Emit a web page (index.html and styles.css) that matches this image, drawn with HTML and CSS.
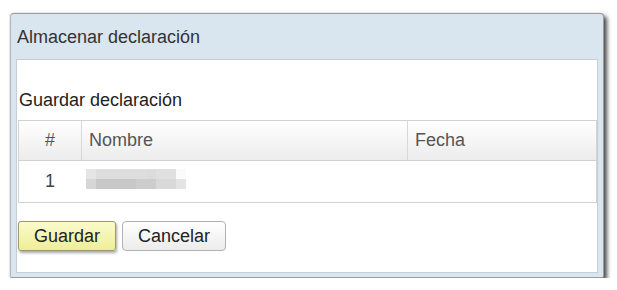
FILE: index.html
```html
<!DOCTYPE html>
<html lang="es">
<head>
<meta charset="utf-8">
<title>Almacenar declaración</title>
<link rel="stylesheet" href="styles.css">
</head>
<body>
<div class="dialog">
  <div class="dialog-title">Almacenar declaración</div>
  <div class="dialog-content">
    <div class="section-title">Guardar declaración</div>
    <div class="tbl">
      <div class="row head">
        <div class="cell c1">#</div>
        <div class="cell c2">Nombre</div>
        <div class="cell c3">Fecha</div>
      </div>
      <div class="row body">
        <div class="cell c1">1</div>
        <div class="cell c2"><span class="blur"></span></div>
        <div class="cell c3"></div>
      </div>
    </div>
    <div class="actions">
      <button class="btn btn-primary">Guardar</button>
      <button class="btn">Cancelar</button>
    </div>
  </div>
</div>
</body>
</html>
```

FILE: styles.css
```css
html, body {
  margin: 0;
  padding: 0;
  background: #ffffff;
}

body {
  font-family: "Liberation Sans", Arial, sans-serif;
  font-size: 18px;
  color: #333;
}

.dialog {
  box-sizing: border-box;
  width: 594px;
  height: 265px;
  margin: 13px 0 0 10px;
  padding: 0 5px 4px 5px;
  background: #d9e5ef;
  border: 1px solid #9c9c9c;
  border-left-color: #b4b4b4;
  border-radius: 4px 4px 2px 2px;
  box-shadow: 3px 3px 4px rgba(0, 0, 0, 0.7), 0 0 2px rgba(0, 0, 0, 0.2);
}

.dialog-title {
  box-sizing: border-box;
  height: 45px;
  padding: 2px 0 0 1px;
  line-height: 43px;
  color: #333;
}

.dialog-content {
  box-sizing: border-box;
  height: 214px;
  background: #ffffff;
  border: 1px solid #c6cfd8;
  padding: 30px 0 0 1px;
}

.section-title {
  height: 20px;
  line-height: 20px;
  margin: 0 0 10px 0;
  padding-left: 1px;
  color: #222;
}

.tbl {
  box-sizing: border-box;
  width: 579px;
  border: 1px solid #d2d2d2;
  border-bottom: none;
}

.row {
  display: grid;
  grid-template-columns: 62px 326px 189px;
  box-sizing: border-box;
  border-bottom: 1px solid #d2d2d2;
}

.head {
  height: 40px;
  background: linear-gradient(#ffffff, #ececec);
  color: #555;
}

.body {
  height: 42px;
  color: #444;
}

.cell {
  box-sizing: border-box;
  line-height: 39px;
  white-space: nowrap;
}

.body .cell {
  line-height: 40px;
}

.c1 {
  text-align: center;
}

.head .c2,
.head .c3 {
  border-left: 1px solid #d8d8d8;
  padding-left: 7px;
}

.body .c2 {
  padding-left: 5px;
  display: flex;
  align-items: flex-start;
}

.blur {
  display: block;
  width: 100px;
  height: 20px;
  margin-top: 8px;
  background:
    linear-gradient(to right,
      #e5e5e5 0, #e5e5e5 10px,
      #dedede 10px, #dedede 60px,
      #dcdcdc 60px, #dcdcdc 70px,
      #e0e0e0 70px, #e0e0e0 90px,
      #fbfbfb 90px, #fbfbfb 100px) top / 100px 10px no-repeat,
    linear-gradient(to right,
      #d6d6d6 0, #d6d6d6 10px,
      #c8c8c8 10px, #c8c8c8 50px,
      #cdcdcd 50px, #cdcdcd 70px,
      #d9d9d9 70px, #d9d9d9 90px,
      #e4e4e4 90px, #e4e4e4 100px) bottom / 100px 10px no-repeat;
}

.actions {
  display: flex;
  gap: 6px;
  margin-top: 18px;
}

.btn {
  box-sizing: border-box;
  height: 30px;
  padding: 0 15px;
  font-family: "Liberation Sans", Arial, sans-serif;
  font-size: 18px;
  color: #222;
  background: linear-gradient(#ffffff, #ececec);
  border: 1px solid #b2b2b2;
  border-radius: 4px;
  line-height: 28px;
}

.btn-primary {
  width: 98px;
  padding: 0;
  background: linear-gradient(#fbfbcc, #eeee98);
  border-color: #9a9a6a;
  border-radius: 3px;
  box-shadow: 1px 2px 3px rgba(0, 0, 0, 0.35);
}
```
